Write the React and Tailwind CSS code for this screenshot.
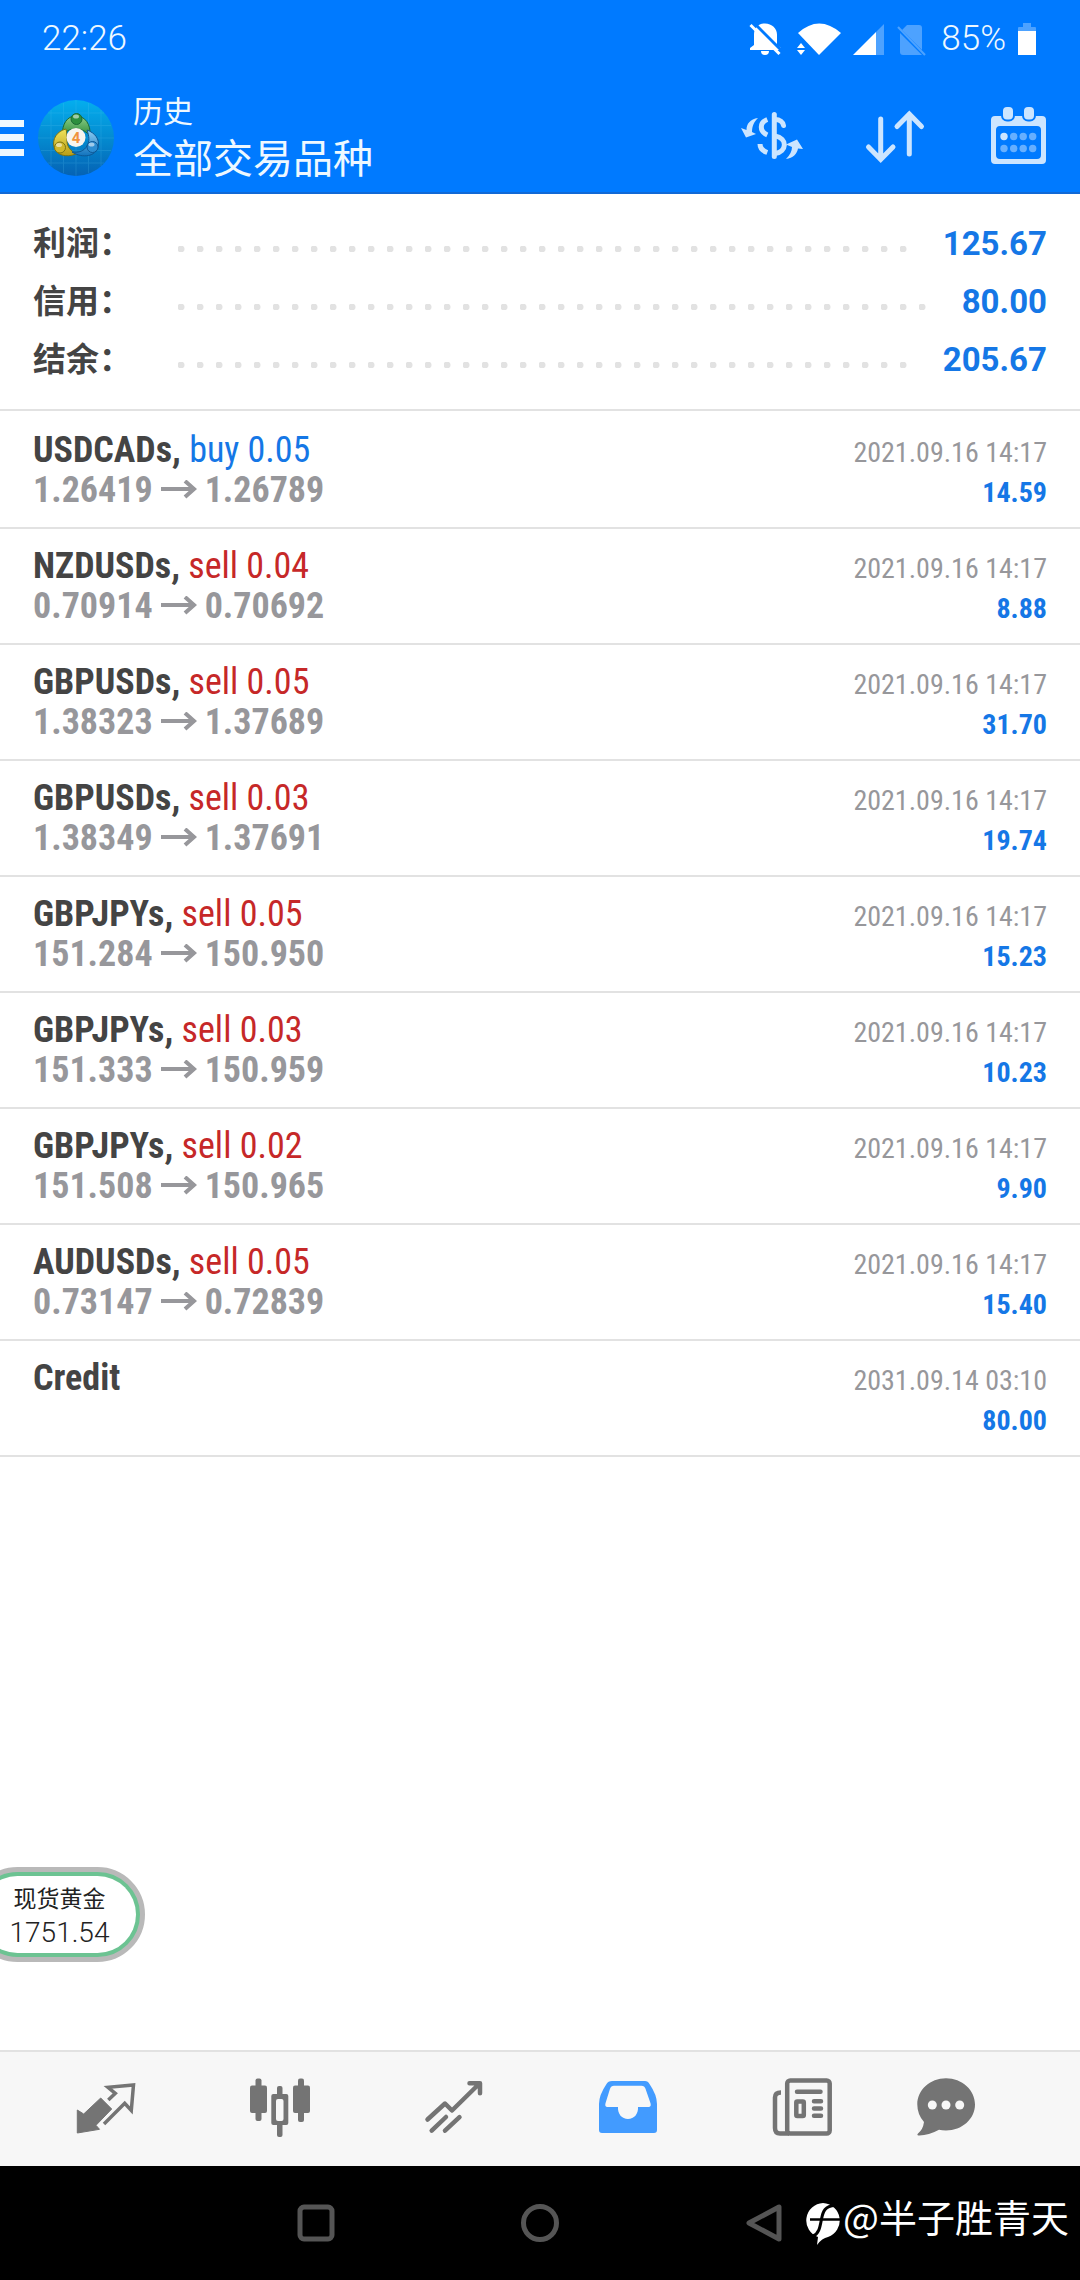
import React from 'react';

const totals = [
  { label: '利润：', value: '125.67' },
  { label: '信用：', value: '80.00' },
  { label: '结余：', value: '205.67' },
];

const trades = [
  { symbol: 'USDCADs,', side: 'buy', lots: '0.05', open: '1.26419', close: '1.26789', time: '2021.09.16 14:17', profit: '14.59' },
  { symbol: 'NZDUSDs,', side: 'sell', lots: '0.04', open: '0.70914', close: '0.70692', time: '2021.09.16 14:17', profit: '8.88' },
  { symbol: 'GBPUSDs,', side: 'sell', lots: '0.05', open: '1.38323', close: '1.37689', time: '2021.09.16 14:17', profit: '31.70' },
  { symbol: 'GBPUSDs,', side: 'sell', lots: '0.03', open: '1.38349', close: '1.37691', time: '2021.09.16 14:17', profit: '19.74' },
  { symbol: 'GBPJPYs,', side: 'sell', lots: '0.05', open: '151.284', close: '150.950', time: '2021.09.16 14:17', profit: '15.23' },
  { symbol: 'GBPJPYs,', side: 'sell', lots: '0.03', open: '151.333', close: '150.959', time: '2021.09.16 14:17', profit: '10.23' },
  { symbol: 'GBPJPYs,', side: 'sell', lots: '0.02', open: '151.508', close: '150.965', time: '2021.09.16 14:17', profit: '9.90' },
  { symbol: 'AUDUSDs,', side: 'sell', lots: '0.05', open: '0.73147', close: '0.72839', time: '2021.09.16 14:17', profit: '15.40' },
  { symbol: 'Credit', time: '2031.09.14 03:10', profit: '80.00' },
];

const StatusBar = () => (
  <div className="flex h-[78px] items-center justify-between pr-[44px] pl-[42px] text-[35px] leading-[40px] font-light">
    <span>22:26</span>
    <div className="flex items-center">
      <svg className="h-[34px] w-[192px]" viewBox="0 0 192 34" fill="#fff">
        {/* muted bell */}
        <path d="M16 1.500c-7 0-11 5-11 11V23l-4 3v2h31v-2l-4-3V12.500c0-6-5-11-12-11zM12 29a4 4 0 0 0 8 0z" />
        <path d="M3 -1l30 30" stroke="#007aff" strokeWidth="3" />
        <path d="M1.500 3l29 29" stroke="#fff" strokeWidth="3" />
        {/* wifi */}
        <path d="M49 11Q70-8 92 11L70 33z" />
        <path d="M52 21l4 5h-8zM52 33l4-5h-8z" />
        {/* signal */}
        <path d="M104 33h23V10z" />
        <path d="M127 10v23h8V2z" opacity=".3" />
        {/* no sim */}
        <path d="M158 3h12q3 0 3 3v22l-20-20zM151 11l22 22h-19q-3 0-3-3z" opacity=".3" />
        <path d="M149 5l27 28" stroke="#4da2ff" strokeWidth="2" />
      </svg>
      <span>85%</span>
      <svg className="ml-[12px] h-[32px] w-[18px]" viewBox="0 0 18 32" fill="#fff">
        <path d="M5 0h8v4h4q1 0 1 1v3H0V5q0-1 1-1h4z" opacity=".3" />
        <path d="M0 8h18v24H0z" />
      </svg>
    </div>
  </div>
);

const AppLogo = () => (
  <svg className="h-[76px] w-[76px]" viewBox="0 0 76 76">
    <defs>
      <linearGradient id="sea" x2="0" y2="1">
        <stop offset="0" stopColor="#04aeee" />
        <stop offset=".55" stopColor="#0487cd" />
        <stop offset="1" stopColor="#0562b4" />
      </linearGradient>
      <linearGradient id="green" x2="0" y2="1">
        <stop offset="0" stopColor="#8fd08a" />
        <stop offset="1" stopColor="#2c8a38" />
      </linearGradient>
      <linearGradient id="yellow" x2="0" y2="1">
        <stop offset="0" stopColor="#f0e35c" />
        <stop offset="1" stopColor="#b99d16" />
      </linearGradient>
      <linearGradient id="blue" x2="0" y2="1">
        <stop offset="0" stopColor="#8ccdf3" />
        <stop offset="1" stopColor="#1173bd" />
      </linearGradient>
    </defs>
    <circle cx="38" cy="38" r="38" fill="url(#sea)" />
    <path d="M13 10v56M25.500 3v70M38 0v76M50.500 3v70M63 10v56M10 13h56M3 25.500h70M0 38h76M3 50.500h70M10 63h56" stroke="#5cc4f2" strokeWidth="1" opacity=".2" />
    <g strokeWidth="1">
      <path d="M24.500 35C24 24 29 16 38 16s15 8 14 20c-3-4-8-7-14-7s-10 2-13.500 6z" fill="url(#green)" stroke="#1c6a34" />
      <path d="M28 29c-9 2-14 10-12 18 2 8 12 11 22 7-5-3-9-7-9-13 0-4 0-8-1-12z" fill="url(#yellow)" stroke="#7b7414" />
      <path d="M49 30c8 3 13 9 11 17-2 9-15 12-26 5 7 1 12-1 15-6 3-5 2-10 0-16z" fill="url(#blue)" stroke="#0c5795" />
      <circle cx="38.500" cy="19" r="5.500" fill="#2d8f3e" stroke="#1c6a34" />
      <circle cx="22" cy="47.500" r="5.500" fill="#d0b82c" stroke="#7b7414" />
      <circle cx="54.500" cy="47" r="5.500" fill="#2c8dd2" stroke="#0c5795" />
    </g>
    <g fill="#fff" opacity=".55">
      <ellipse cx="38" cy="16.500" rx="3" ry="2" />
      <ellipse cx="21" cy="45" rx="3" ry="2" />
      <ellipse cx="53.500" cy="44.500" rx="3" ry="2" />
    </g>
    <circle cx="38" cy="37.500" r="9.500" fill="#f7f4ee" />
    <text x="38" y="43" textAnchor="middle" className="text-[15px] font-bold" fill="#f0923c">4</text>
  </svg>
);

const Header = () => (
  <header className="border-b-2 border-[#1169d6] bg-[#007aff] text-[#eef8ff]">
    <StatusBar />
    <div className="flex h-[114px] items-center pt-[6px] pr-[30px]">
      <button type="button" aria-label="菜单">
        <svg className="h-[36px] w-[24px]" viewBox="0 0 24 36" fill="currentColor">
          <path d="M0 0h24v7H0zM0 14h24v7H0zM0 29h24v7H0z" />
        </svg>
      </button>
      <div className="ml-[14px]">
        <AppLogo />
      </div>
      <div className="ml-[19px] flex-1">
        <p className="text-[30px] leading-[44px]">历史</p>
        <h1 className="text-[40px] leading-[52px] font-normal">全部交易品种</h1>
      </div>
      <div className="flex gap-[59px] text-[#cce5ff]">
        <button type="button" aria-label="交易品种">
          <svg className="h-[64px] w-[64px]" viewBox="0 0 64 64" fill="none" stroke="currentColor" strokeWidth="5">
            <path d="M34.300 8.500v42" strokeLinecap="round" />
            <path d="M27.300 13.500c-8 3-8 12 0 15.500M20 38c0 4 3 7 7.300 8.500" />
            <path d="M35 13.500c5 0 8 2.500 8.500 6M35 30c13 2 12 16 0 17.500" strokeLinecap="round" />
            <path d="M18 12C10 13 6.500 18 6.500 24L1 22l5 9.500L16 28l-4-2c0-6 2-10 6-14z" fill="currentColor" stroke="none" />
            <path d="M46 53c4-4 6-8 6-12l-6-2.500 11-5L63 43l-5-.500C57 48 53 52 46 53z" fill="currentColor" stroke="none" />
          </svg>
        </button>
        <button type="button" aria-label="排序">
          <svg className="h-[64px] w-[64px]" viewBox="0 0 64 64" fill="none" stroke="currentColor" strokeWidth="5" strokeLinecap="round">
            <path d="M17.700 13v40M5.500 41l12.200 12.500L30 41M46.300 48V8M34 20.500L46.300 8l12.200 12.500" />
          </svg>
        </button>
        <button type="button" aria-label="日期">
          <svg className="h-[64px] w-[64px]" viewBox="0 0 64 64" fill="currentColor">
            <path fillRule="evenodd" d="M9 10h47q4 0 4 4v40q0 4-4 4H9q-4 0-4-4V14q0-4 4-4zM14 20q-4 0-4 4v25q0 4 4 4h37q4 0 4-4V24q0-4-4-4z" />
            <g stroke="#007aff" strokeWidth="2">
              <rect x="16" y="0" width="12" height="14.500" rx="5" />
              <rect x="37" y="0" width="12" height="14.500" rx="5" />
            </g>
            <circle cx="18" cy="30.500" r="3.700" />
            <g opacity=".5">
              <circle cx="27.700" cy="30.500" r="3.700" />
              <circle cx="37.200" cy="30.500" r="3.700" />
              <circle cx="46.700" cy="30.500" r="3.700" />
              <circle cx="18" cy="42.500" r="3.700" />
              <circle cx="27.700" cy="42.500" r="3.700" />
              <circle cx="37.200" cy="42.500" r="3.700" />
              <circle cx="46.700" cy="42.500" r="3.700" />
            </g>
          </svg>
        </button>
      </div>
    </div>
  </header>
);

const Summary = () => (
  <dl className="border-b-2 border-[#e2e2e2] px-[33px] pt-[21px] pb-[20px]">
    {totals.map((t) => (
      <div key={t.label} className="flex h-[58px] items-center">
        <dt className="w-[145px] text-[33px] leading-[40px] font-bold text-[#444]">{t.label}</dt>
        <dd className="flex flex-1 items-center">
          {/* dotted leader */}
          <span className="mt-[10px] mr-[30px] h-[6px] flex-1 bg-[radial-gradient(circle_at_3px_3px,#e2e2e2_3px,transparent_4px)] bg-[length:19px_6px] bg-repeat-x" />
          <span className="text-[33px] leading-[40px] font-bold text-[#1577e6]">{t.value}</span>
        </dd>
      </div>
    ))}
  </dl>
);

const TradeRow = ({ trade }) => (
  <li className="flex h-[116px] justify-between border-b-2 border-[#e2e2e2] px-[33px] pt-[17px] font-['Roboto_Condensed','Roboto',sans-serif]">
    <div className="text-[36px] leading-[40px] font-bold">
      <p className="text-[#444]">
        {trade.symbol}{' '}
        {trade.side && (
          <span className={trade.side === 'buy' ? 'font-normal text-[#1577e6]' : 'font-normal text-[#c62828]'}>
            {trade.side} {trade.lots}
          </span>
        )}
      </p>
      {trade.open && (
        <p className="flex items-center text-[#97979b]">
          {trade.open}
          <svg className="mx-[8px] h-[20px] w-[36px]" viewBox="0 0 36 20" fill="none" stroke="currentColor" strokeWidth="4">
            <path d="M0 9h33M24 1l9 8-9 8" />
          </svg>
          {trade.close}
        </p>
      )}
    </div>
    <div className="pt-[3px] text-right text-[28px] leading-[40px]">
      <p className="text-[#97979b]">{trade.time}</p>
      <p className="font-bold text-[#1577e6]">{trade.profit}</p>
    </div>
  </li>
);

const QuoteBubble = () => (
  <div className="absolute bottom-[88px] left-[-30px] flex h-[95px] w-[175px] flex-col items-center rounded-full border-[5px] border-[#b9b9b9] bg-[#6cc392] p-[4px]">
    <div className="flex w-full flex-1 flex-col items-center justify-center rounded-full bg-white pt-[4px] pl-[4px] font-light text-[#222]">
      <span className="text-[23px] leading-[32px] font-normal">现货黄金</span>
      <span className="text-[28px] leading-[34px]">1751.54</span>
    </div>
  </div>
);

const tabs = [
  {
    label: '行情',
    icon: (
      <>
        <path d="M4.300 33l6.400 4 17-16 11 11L23 48.300l3.500 4L4.300 56z" fill="currentColor" stroke="currentColor" strokeLinejoin="round" />
        <path d="M35.300 23l7-6.700-7.300-6L60.500 8l-2.200 25.500-6.600-7.200L31 47" fill="none" stroke="currentColor" strokeWidth="3.500" />
      </>
    ),
  },
  {
    label: '图表',
    icon: (
      <>
        <g fill="currentColor">
          <rect x="3" y="8.500" width="17" height="27.500" rx="2" />
          <rect x="8.500" y="1.500" width="6" height="42.500" rx="2" />
          <rect x="46" y="8.500" width="17" height="27.500" rx="2" />
          <rect x="51" y="1.500" width="6" height="43.500" rx="2" />
          <rect x="24.300" y="17" width="17" height="31" rx="2" />
          <rect x="30" y="9" width="5.500" height="51" rx="2" />
        </g>
        <rect x="29" y="22" width="7.500" height="22" rx="2" fill="#f7f7f7" />
      </>
    ),
  },
  {
    label: '交易',
    icon: (
      <path
        d="M6.500 42.500L24 26.500l7 7L58.500 6.500M48.500 6.200H59v10M10.700 53.700L25 40M24 53.700l14.500-13.500"
        fill="none"
        stroke="currentColor"
        strokeWidth="4.500"
        strokeLinecap="round"
        strokeLinejoin="round"
      />
    ),
  },
  {
    label: '历史',
    active: true,
    icon: (
      <path
        d="M17 4h33q3 0 4.500 3Q62 18 62 27v26q0 3-3 3H7q-3 0-3-3V27Q4 18 11.500 7 13 4 17 4zM19 8.700q-3 0-4 3l-4.500 14.500q-1 3.800 2 3.800H23c-.500 7 4 12 10 12s10.500-5 10-12h10.500q3 0 2-3.800L50.500 11.700q-1-3-4-3z"
        fill="currentColor"
        fillRule="evenodd"
      />
    ),
  },
  {
    label: '新闻',
    icon: (
      <g fill="none" stroke="currentColor" strokeWidth="4.500">
        <rect x="18.200" y="3.500" width="42.500" height="53" rx="3" />
        <path d="M12 15.500q-6 0-6 5V51q0 5.500 5 5.500h9" />
        <path d="M28 14.700h23.500M45 24.300h7M45 31.500h7M45 38.700h7" strokeLinecap="round" />
        <rect x="27.300" y="24.500" width="7.500" height="14.500" rx="1" />
      </g>
    ),
  },
  {
    label: '聊天',
    icon: (
      <>
        <path d="M32 1.300C48 1.300 61 13 61 27.500S48 53.500 32 53.500q-4 0-7-.700-11 6-20.500 5.700-2-.500-.500-2 5-4 6-11.500-6.700-7.500-6.700-17.500C3.300 13 16 1.300 32 1.300z" fill="currentColor" />
        <g fill="#f7f7f7">
          <circle cx="18.300" cy="28" r="4.500" />
          <circle cx="32" cy="28" r="4.500" />
          <circle cx="45.700" cy="28" r="4.500" />
        </g>
      </>
    ),
  },
];

const TabBar = () => (
  <nav className="grid h-[116px] grid-cols-[3fr_3fr_3fr_3fr_3fr_2fr] border-t-2 border-[#e2e2e2] bg-[#f7f7f7] pr-[76px] pl-[18px]">
    {tabs.map((tab) => (
      <button
        key={tab.label}
        type="button"
        aria-label={tab.label}
        className={tab.active ? 'flex items-center justify-center text-[#429bff]' : 'flex items-center justify-center text-[#747474]'}
      >
        <svg className="h-[64px] w-[64px]" viewBox="0 0 64 64">{tab.icon}</svg>
      </button>
    ))}
  </nav>
);

const SystemNav = () => (
  <footer className="relative flex h-[114px] items-center justify-center gap-[160px] bg-black text-[#555]">
    <button type="button" aria-label="最近任务">
      <svg className="h-[64px] w-[64px]" viewBox="0 0 64 64" fill="none" stroke="currentColor" strokeWidth="5">
        <rect x="16" y="16" width="32" height="32" rx="4" />
      </svg>
    </button>
    <button type="button" aria-label="主屏幕">
      <svg className="h-[64px] w-[64px]" viewBox="0 0 64 64" fill="none" stroke="currentColor" strokeWidth="5">
        <circle cx="32" cy="32" r="16.500" />
      </svg>
    </button>
    <button type="button" aria-label="返回">
      <svg className="h-[64px] w-[64px]" viewBox="0 0 64 64" fill="none" stroke="currentColor" strokeWidth="5" strokeLinejoin="round">
        <path d="M47 16v32L17 32z" />
      </svg>
    </button>
    <div className="absolute top-[20px] right-[11px] flex items-center gap-[2px] text-[38px] leading-[40px] text-white font-['Noto_Sans_CJK_SC',sans-serif]">
      <svg className="mt-[16px] h-[44px] w-[36px]" viewBox="0 0 36 44">
        <path d="M18 1a17.500 17.500 0 0 1 5 34q-6 1-11 8l1-8A17.500 17.500 0 0 1 18 1z" fill="#fff" />
        <path d="M30 3.500C20 4 18 9 16.500 17 15 25 14 32 8 34" fill="none" stroke="#000" strokeWidth="3" />
        <path d="M5 17.500h31" stroke="#000" strokeWidth="2.500" />
        <path d="M0 26q5 8 11 9l-1 8H0z" fill="#000" />
      </svg>
      <span>@半子胜青天</span>
    </div>
  </footer>
);

const App = () => (
  <div className="flex min-h-screen flex-col bg-white font-['Roboto','Noto_Sans_CJK_SC',sans-serif]">
    <Header />
    <main className="relative flex-1 overflow-hidden">
      <Summary />
      <ul className="pt-[2px]">
        {trades.map((t, i) => (
          <TradeRow key={i} trade={t} />
        ))}
      </ul>
      <QuoteBubble />
    </main>
    <TabBar />
    <SystemNav />
  </div>
);

export default App;
